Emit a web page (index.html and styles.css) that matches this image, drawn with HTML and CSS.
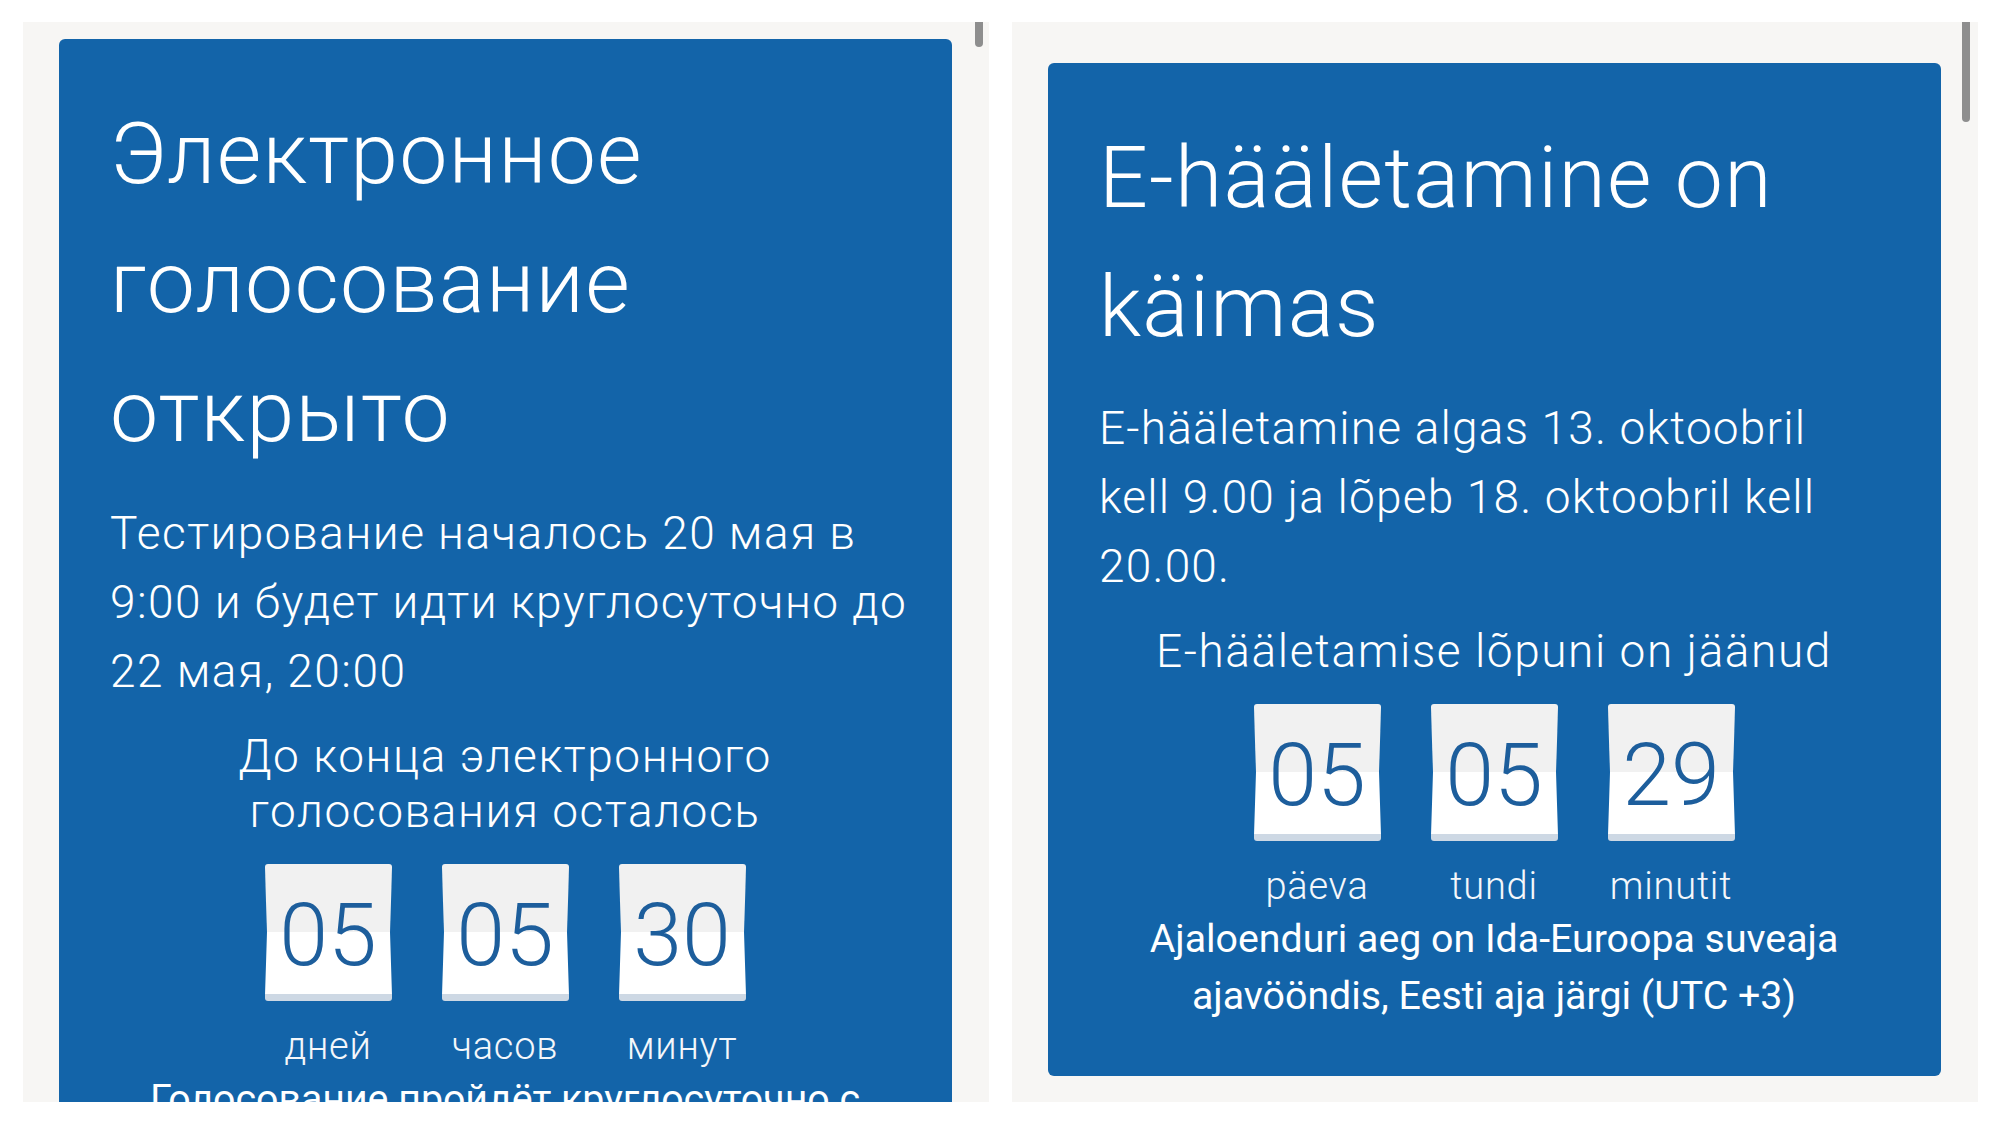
FILE: index.html
```html
<!DOCTYPE html>
<html lang="et">
<head>
<meta charset="utf-8">
<title>E-voting</title>
<link rel="stylesheet" href="styles.css">
</head>
<body>
<div class="screens">
  <section class="panel panel-left">
    <div class="scrollbar scrollbar-short"></div>
    <div class="card">
      <h1 class="title">Электронное<br>голосование<br>открыто</h1>
      <p class="lead">Тестирование началось 20 мая в<br>9:00 и будет идти круглосуточно до<br>22 мая, 20:00</p>
      <p class="sub">До конца электронного<br>голосования осталось</p>
      <div class="timer">
        <div class="unit">
          <div class="tile"><svg class="tile-bg" viewBox="0 0 127 137" preserveAspectRatio="none"><path d="M3,0 L124,0 Q127,0 127,3 Q126,40 125,68 L2,68 Q1,40 0,3 Q0,0 3,0 Z" fill="#f1f1f1"/><path d="M2,68 L125,68 Q126,100 127,131 L0,131 Q1,100 2,68 Z" fill="#ffffff"/><path d="M0,130 L127,130 L127,134 Q127,137 124,137 L3,137 Q0,137 0,134 Z" fill="#cdd8e4"/></svg><span class="num">05</span></div>
          <div class="label">дней</div>
        </div>
        <div class="unit">
          <div class="tile"><svg class="tile-bg" viewBox="0 0 127 137" preserveAspectRatio="none"><path d="M3,0 L124,0 Q127,0 127,3 Q126,40 125,68 L2,68 Q1,40 0,3 Q0,0 3,0 Z" fill="#f1f1f1"/><path d="M2,68 L125,68 Q126,100 127,131 L0,131 Q1,100 2,68 Z" fill="#ffffff"/><path d="M0,130 L127,130 L127,134 Q127,137 124,137 L3,137 Q0,137 0,134 Z" fill="#cdd8e4"/></svg><span class="num">05</span></div>
          <div class="label">часов</div>
        </div>
        <div class="unit">
          <div class="tile"><svg class="tile-bg" viewBox="0 0 127 137" preserveAspectRatio="none"><path d="M3,0 L124,0 Q127,0 127,3 Q126,40 125,68 L2,68 Q1,40 0,3 Q0,0 3,0 Z" fill="#f1f1f1"/><path d="M2,68 L125,68 Q126,100 127,131 L0,131 Q1,100 2,68 Z" fill="#ffffff"/><path d="M0,130 L127,130 L127,134 Q127,137 124,137 L3,137 Q0,137 0,134 Z" fill="#cdd8e4"/></svg><span class="num">30</span></div>
          <div class="label">минут</div>
        </div>
      </div>
      <p class="note">Голосование пройдёт круглосуточно с</p>
    </div>
  </section>

  <section class="panel panel-right">
    <div class="scrollbar scrollbar-long"></div>
    <div class="card">
      <h1 class="title">E-hääletamine on<br>käimas</h1>
      <p class="lead lead-et">E-hääletamine algas 13. oktoobril<br>kell 9.00 ja lõpeb 18. oktoobril kell<br>20.00.</p>
      <p class="sub">E-hääletamise lõpuni on jäänud</p>
      <div class="timer">
        <div class="unit">
          <div class="tile"><svg class="tile-bg" viewBox="0 0 127 137" preserveAspectRatio="none"><path d="M3,0 L124,0 Q127,0 127,3 Q126,40 125,68 L2,68 Q1,40 0,3 Q0,0 3,0 Z" fill="#f1f1f1"/><path d="M2,68 L125,68 Q126,100 127,131 L0,131 Q1,100 2,68 Z" fill="#ffffff"/><path d="M0,130 L127,130 L127,134 Q127,137 124,137 L3,137 Q0,137 0,134 Z" fill="#cdd8e4"/></svg><span class="num">05</span></div>
          <div class="label">päeva</div>
        </div>
        <div class="unit">
          <div class="tile"><svg class="tile-bg" viewBox="0 0 127 137" preserveAspectRatio="none"><path d="M3,0 L124,0 Q127,0 127,3 Q126,40 125,68 L2,68 Q1,40 0,3 Q0,0 3,0 Z" fill="#f1f1f1"/><path d="M2,68 L125,68 Q126,100 127,131 L0,131 Q1,100 2,68 Z" fill="#ffffff"/><path d="M0,130 L127,130 L127,134 Q127,137 124,137 L3,137 Q0,137 0,134 Z" fill="#cdd8e4"/></svg><span class="num">05</span></div>
          <div class="label">tundi</div>
        </div>
        <div class="unit">
          <div class="tile"><svg class="tile-bg" viewBox="0 0 127 137" preserveAspectRatio="none"><path d="M3,0 L124,0 Q127,0 127,3 Q126,40 125,68 L2,68 Q1,40 0,3 Q0,0 3,0 Z" fill="#f1f1f1"/><path d="M2,68 L125,68 Q126,100 127,131 L0,131 Q1,100 2,68 Z" fill="#ffffff"/><path d="M0,130 L127,130 L127,134 Q127,137 124,137 L3,137 Q0,137 0,134 Z" fill="#cdd8e4"/></svg><span class="num">29</span></div>
          <div class="label">minutit</div>
        </div>
      </div>
      <p class="note">Ajaloenduri aeg on Ida-Euroopa suveaja<br>ajavööndis, Eesti aja järgi (UTC +3)</p>
    </div>
  </section>
</div>
</body>
</html>
```

FILE: styles.css
```css
* { box-sizing: border-box; }

html, body {
  margin: 0;
  padding: 0;
  background: #ffffff;
}

body {
  font-family: Roboto, "Noto Sans", "DejaVu Sans", sans-serif;
  width: 2000px;
  height: 1125px;
  overflow: hidden;
}

.screens {
  display: flex;
  gap: 23px;
  padding: 22px 0 0 23px;
}

.panel {
  position: relative;
  width: 966px;
  height: 1080px;
  background: #f7f6f4;
  overflow: hidden;
  padding: 0 37px 0 36px;
}

.panel-left { padding-top: 17px; }
.panel-right { padding-top: 41px; }

.scrollbar {
  position: absolute;
  top: 0;
  right: 6px;
  width: 8px;
  background: #8e8e8e;
  border-radius: 0 0 4px 4px;
  z-index: 2;
}
.scrollbar-short { height: 25px; }
.scrollbar-long { height: 100px; right: 8px; }

.card {
  background: #1364a9;
  border-radius: 6px;
  padding: 50px 30px 51px 51px;
  color: #ffffff;
}

.title {
  margin: 0;
  font-weight: 300;
  font-size: 86px;
  line-height: 129px;
  letter-spacing: 0.014em;
  white-space: nowrap;
}

.lead {
  margin: 23px 0 0;
  font-weight: 300;
  font-size: 46px;
  line-height: 69px;
  letter-spacing: 0.032em;
  white-space: nowrap;
}

.lead-et { letter-spacing: 0.026em; }

.sub {
  margin: 23px 0 0;
  font-weight: 300;
  font-size: 46px;
  line-height: 55px;
  letter-spacing: 0.034em;
  text-align: center;
  padding-right: 22px;
  white-space: nowrap;
}

.timer {
  display: flex;
  justify-content: center;
  gap: 50px;
  margin-top: 25px;
  padding-right: 22px;
}

.unit {
  display: flex;
  flex-direction: column;
  align-items: center;
  width: 127px;
}

.tile {
  position: relative;
  width: 127px;
  height: 137px;
  display: flex;
  align-items: center;
  justify-content: center;
}

.tile-bg {
  position: absolute;
  left: 0;
  top: 0;
  width: 127px;
  height: 137px;
}

.num {
  position: relative;
  font-weight: 300;
  font-size: 88px;
  line-height: 137px;
  color: #1d5e9c;
  padding-top: 4px;
}

.label {
  margin-top: 22px;
  font-weight: 300;
  font-size: 38px;
  line-height: 46px;
  letter-spacing: 0.02em;
  color: #f4f7fb;
  white-space: nowrap;
}

.note {
  margin: 2px 0 0;
  font-weight: 400;
  font-size: 39.3px;
  line-height: 57px;
  text-align: center;
  padding-right: 22px;
  white-space: nowrap;
}
```
